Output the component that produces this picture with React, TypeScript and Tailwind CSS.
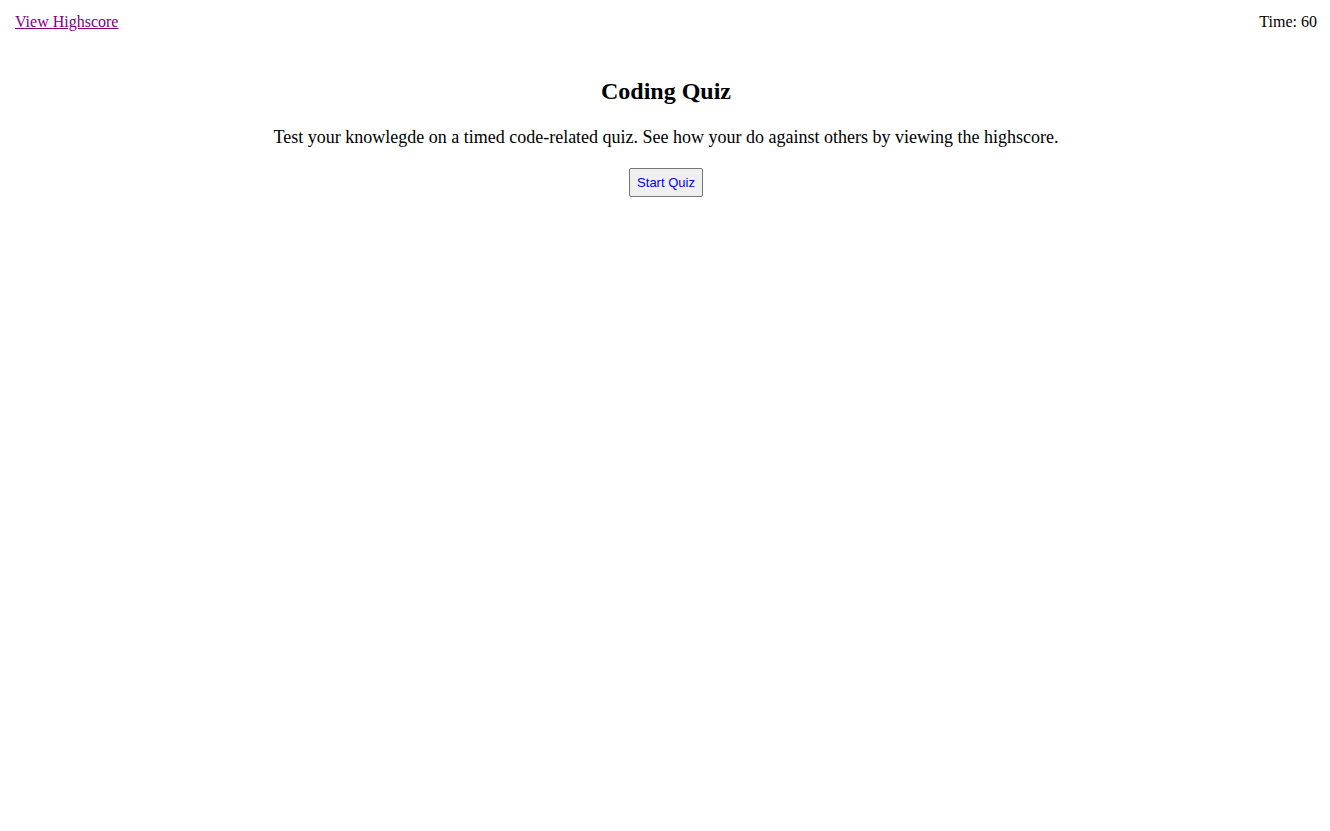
import React from "react";

export default function App() {
  return (
    <div className="min-h-screen bg-white text-black font-['Liberation_Serif',serif]">
      <header className="flex justify-between items-center px-[15px] pt-[13px] text-[16px] leading-[18px]">
        <a href="#" className="text-[#800080] underline">
          View Highscore
        </a>
        <span className="mr-[-2px]">Time: 60</span>
      </header>

      <main className="flex flex-col items-center text-center mt-[47px] pl-[2px]">
        <h2 className="text-[24px] leading-[27px] font-bold">Coding Quiz</h2>
        <p className="text-[18px] leading-[21px] mt-[22px]">
          Test your knowlegde on a timed code-related quiz. See how your do against others by viewing the highscore.
        </p>
        <button className="mt-[20px] h-[29px] px-[7px] text-[13px] text-[#0000ee] bg-[#efefef] border border-[#767676] rounded-[2px] font-['Liberation_Sans',Arial,sans-serif]">
          Start Quiz
        </button>
      </main>
    </div>
  );
}
